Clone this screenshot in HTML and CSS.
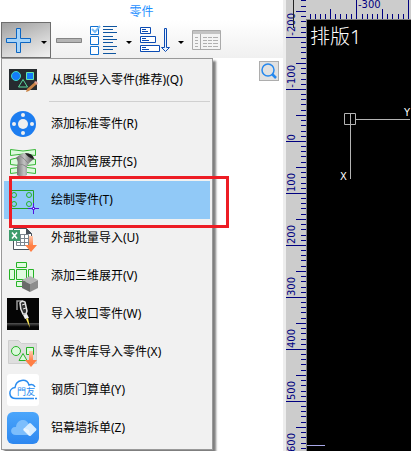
FILE: index.html
```html
<!DOCTYPE html>
<html lang="zh-CN">
<head>
  <meta charset="UTF-8">
  <meta name="viewport" content="width=device-width, initial-scale=1">
  <title>零件</title>
  <link rel="stylesheet" href="styles.css">
</head>
<body>

  <!-- shared shapes -->
  <svg class="defs" width="0" height="0" aria-hidden="true">
    <defs>
      <linearGradient id="arrowFill" x1="0" y1="0" x2="0" y2="1">
        <stop offset="0" stop-color="#ffc9ad"/>
        <stop offset="0.6" stop-color="#ff7f45"/>
      </linearGradient>
      <linearGradient id="pipeFill">
        <stop offset="0" stop-color="#686868"/>
        <stop offset="0.45" stop-color="#c4c4c4"/>
        <stop offset="1" stop-color="#585858"/>
      </linearGradient>
      <linearGradient id="cloudFill" x1="0" y1="0" x2="0" y2="1">
        <stop offset="0" stop-color="#4ba6fb"/>
        <stop offset="1" stop-color="#2d87f0"/>
      </linearGradient>
      <linearGradient id="benchFill" x1="0" y1="0" x2="0" y2="1">
        <stop offset="0" stop-color="#555"/>
        <stop offset="1" stop-color="#000"/>
      </linearGradient>
      <symbol id="ticks-v" viewBox="0 0 20 52">
        <path d="M15 4.5h5M15 9.5h5M15 14.5h5M15 20.5h5M10 25.5h10M15 30.5h5M15 35.5h5M15 41.5h5M15 46.5h5M0 51.5h20"/>
      </symbol>
      <symbol id="ticks-h" viewBox="0 0 52 19">
        <path d="M.5 0v19M6.5 14v5M11.5 14v5M16.5 14v5M21.5 14v5M26.5 9v10M31.5 14v5M36.5 14v5M42.5 14v5M47.5 14v5"/>
      </symbol>
      <symbol id="down-arrow" viewBox="0 0 12 17">
        <path d="M4 0h4v9h4l-6 7-6-7h4z" fill="url(#arrowFill)"/>
      </symbol>
    </defs>
  </svg>

  <div class="app">
    <main class="panel">
      <header class="ribbon">
        <h1 class="ribbon-title">零件</h1>
        <div class="toolbar">
          <button class="tool tool-add" aria-label="添加" aria-expanded="true">
            <svg width="25" height="25" viewBox="0 0 25 25">
              <path d="M10.5.5h4v10h10v4h-10v10h-4v-10H.5v-4h10z" fill="#a5d4fa" stroke="#0b65c2"/>
            </svg>
            <span class="caret"></span>
          </button>
          <button class="tool" aria-label="删除">
            <svg width="26" height="5" viewBox="0 0 26 5">
              <path d="M.5.5h25v4H.5z" fill="#b5b5b5" stroke="#858585"/>
            </svg>
          </button>
          <button class="tool" aria-label="选择">
            <svg width="28" height="30" viewBox="0 0 28 30" fill="none">
              <path d="M.5 1.5h8v8h-8zM.5 11.5h8v8h-8zM.5 21.5h8v8h-8z" fill="#fff" stroke="#0f6fd0"/>
              <path d="M2 4l3 3 5-6" stroke="#7dbdf5" stroke-width="2"/>
              <path d="M13 1.5h14M13 4.5h10M13 7.5h14M13 11.5h10M13 14.5h14M13 17.5h10M13 21.5h14M13 24.5h10M13 28.5h13" stroke="#0f559f"/>
            </svg>
            <span class="caret"></span>
          </button>
          <button class="tool" aria-label="排序">
            <svg width="30" height="26" viewBox="0 0 30 26" fill="none" stroke="#0b4bb3">
              <path d="M.5.5h10v6H.5zM.5 9.5h15v6H.5zM.5 18.5h19v6H.5z" fill="#fff"/>
              <path d="M2 2.5h4M2 4.5h6M2 11.5h4M2 13.5h7M2 20.5h4M2 22.5h7"/>
              <path d="M24.500 1.500h2v19h3l-4 4-4-4h3z" fill="#eaf3ff"/>
            </svg>
            <span class="caret"></span>
          </button>
          <button class="tool" aria-label="列表">
            <svg width="29" height="21" viewBox="0 0 29 21">
              <path d="M.5.5h28v19H.5z" fill="#f4f4f4" stroke="#aaa"/>
              <path d="M1 1h27v3H1z" fill="#c4c4c4"/>
              <path d="M8.500 4v16" stroke="#aaa"/>
              <path d="M3 7.500h3M3 10.500h3M3 13.500h3M3 16.500h3M11 7.500h4M16 7.500h4M21 7.500h5M11 10.500h4M16 10.500h4M21 10.500h5M11 13.500h4M16 13.500h4M21 13.500h5M11 16.500h4M16 16.500h4M21 16.500h5" stroke="#b0b0b0"/>
            </svg>
          </button>
        </div>
      </header>

      <div class="search-row">
        <button class="search" aria-label="搜索">
          <svg width="18" height="18" viewBox="0 0 18 18" fill="none" stroke="#2588ee">
            <circle cx="8" cy="8" r="6" stroke-width="1.500"/>
            <path d="M12 12l4 4" stroke-width="2.500"/>
          </svg>
        </button>
      </div>

      <div class="menu" role="menu">
        <button class="item" role="menuitem">
          <svg class="icon" viewBox="0 0 32 32">
            <path d="M2 5h28v21H2z" fill="#262b2f"/>
            <circle cx="9" cy="12" r="4.500" fill="#147dfa" stroke="#42d9c0"/>
            <path d="M19.500 8.500h7v7h-7z" fill="#147dfa" stroke="#64e8ac"/>
            <path d="M16 15.500l4.500 7.500h-9z" fill="none" stroke="#5cdb9e"/>
            <path d="M19 28l1-3 8-7 2 2-8 7z" fill="#c98447"/>
            <path d="M27 18l2-1 2 2-1 2z" fill="#e4a49a"/>
          </svg>
          从图纸导入零件(推荐)(Q)
        </button>
        <hr class="divider">
        <button class="item" role="menuitem">
          <svg class="icon" viewBox="0 0 32 32">
            <circle cx="16" cy="16" r="13" fill="#1d7df0"/>
            <circle cx="16" cy="16" r="5" fill="#f0f0f0"/>
            <g fill="#f0f0f0">
              <circle cx="16" cy="7" r="2"/><circle cx="16" cy="25" r="2"/>
              <circle cx="7" cy="16" r="2"/><circle cx="25" cy="16" r="2"/>
            </g>
          </svg>
          添加标准零件(R)
        </button>
        <button class="item" role="menuitem">
          <svg class="icon" viewBox="0 0 32 32">
            <g fill="#dcfadc" stroke="#36b636">
              <path d="M3.500 3.500q12.500 3 25 0v6q-12.500-3-25 0z"/>
              <path d="M3.500 13.500q12.500-4 25 0v5q-12.500 3-25 0z"/>
              <path d="M3.500 22.500q12.500-3 25 0v5q-12.500-3-25 0z"/>
            </g>
            <path d="M9 12q5-5 10-5 7 1 8 6-6 4-7 8v8q-5 3-10 0v-8q2-5-1-9z" fill="url(#pipeFill)"/>
            <path d="M18 7q8 0 9 6-6-1-9-6z" fill="#222"/>
            <path d="M10 19q6-2 10 2M13 10q4 2 8 7" fill="none" stroke="#8a8a8a"/>
          </svg>
          添加风管展开(S)
        </button>
        <button class="item active" role="menuitem">
          <svg class="icon" viewBox="0 0 32 32" fill="none">
            <path d="M3.500 6.500h23v18h-23z" stroke="#26a326"/>
            <g stroke="#26b326">
              <circle cx="7" cy="11" r="2.500"/><circle cx="22" cy="11" r="2.500"/>
              <circle cx="7" cy="20" r="2.500"/><circle cx="22" cy="20" r="2.500"/>
            </g>
            <path d="M26.500 19v11M21 24.500h11" stroke="#5314e0"/>
            <path d="M25.500 23.500h2v2h-2z" fill="#fff" stroke="#5314e0"/>
          </svg>
          绘制零件(T)
        </button>
        <button class="item" role="menuitem">
          <svg class="icon" viewBox="0 0 32 32">
            <path d="M6.500 6.500h13l5 5v16h-18z" fill="#fff" stroke="#4a525c"/>
            <path d="M19 6v6h6z" fill="#4a525c"/>
            <path d="M9.500 12.500h12v11h-12zM9 16.500h12M9 20.500h12M13.500 12v12M17.500 12v12" fill="none" stroke="#7c8590"/>
            <path d="M2 8h11v11H2z" fill="#3e9c6c"/>
            <path d="M5 10.500l5 6M10 10.500l-5 6" stroke="#fff" stroke-width="1.500"/>
            <use href="#down-arrow" x="18" y="14" width="12" height="17"/>
          </svg>
          外部批量导入(U)
        </button>
        <button class="item" role="menuitem">
          <svg class="icon" viewBox="0 0 32 32">
            <path d="M9.500 2.500h10v5h-10zM9.500 9.500h10v10h-10zM2.500 9.500h5v10h-5zM21.500 9.500h5v10h-5zM9.500 21.500h9v5h-9z" fill="#e0fbe0" stroke="#26b326"/>
            <path d="M15 20l8-4 8 4-8 4z" fill="#b4b4b4"/>
            <path d="M15 20l8 4v8l-8-4z" fill="#6a6a6a"/>
            <path d="M31 20l-8 4v8l8-4z" fill="#8c8c8c"/>
          </svg>
          添加三维展开(V)
        </button>
        <button class="item" role="menuitem">
          <svg class="icon" viewBox="0 0 32 32">
            <path d="M0 0h32v32H0z" fill="#050505"/>
            <path d="M0 25h32v4H0z" fill="url(#benchFill)"/>
            <path d="M10 12V3h6" fill="none" stroke="#999" stroke-width="1.500"/>
            <path d="M13 5q2-3 5-1l2 9-1 3h-3q-3-5-3-11z" fill="#333" stroke="#e2e2e2" stroke-width="1.500"/>
            <path d="M15 7l3-1M16 11l3-1" stroke="#e2e2e2"/>
            <path d="M16 17l4-1 2 4-4 1z" fill="#efefef"/>
            <path d="M19 21l2-1 2 10z" fill="#ffe95a"/>
          </svg>
          导入坡口零件(W)
        </button>
        <button class="item" role="menuitem">
          <svg class="icon" viewBox="0 0 32 32">
            <path d="M1.500 4.500h10l3 3h15v20h-28z" fill="#dedede" stroke="#cfcfcf"/>
            <g fill="#dcfadc" stroke="#26b326">
              <circle cx="9" cy="15" r="4.500"/>
              <path d="M19.500 11.500h7v7h-7zM16 17.500l4 7h-8z"/>
            </g>
            <use href="#down-arrow" x="18" y="15" width="12" height="17"/>
          </svg>
          从零件库导入零件(X)
        </button>
        <button class="item" role="menuitem">
          <svg class="icon" viewBox="0 0 32 32">
            <rect width="32" height="32" rx="3" fill="#fff"/>
            <path d="M27 24.500H9c-8 0-8-10-1-11C9 5 20 4 22 11c3-1 5 0 6 2" fill="none" stroke="#2a8cf0" stroke-width="1.500"/>
            <path d="M28 24.500h2" stroke="#2a8cf0" stroke-width="1.500"/>
            <text class="logo-text" x="10" y="21">門友</text>
          </svg>
          钢质门算单(Y)
        </button>
        <button class="item" role="menuitem">
          <svg class="icon" viewBox="0 0 32 32">
            <rect width="32" height="32" rx="6" fill="url(#cloudFill)"/>
            <path d="M9 23c-7 0-6-9 0-8 1-9 12-9 13-1 6 1 5 9 0 9z" fill="#7dbefc"/>
            <path d="M22 11.500q1-1 2 0l5 5q1 1 0 2l-5 5q-1 1-2 0l-5-5q-1-1 0-2z" fill="#d6ecff"/>
            <path d="M17 16l5 2 1 5-1 1-6-6z" fill="#fff" opacity=".5"/>
          </svg>
          铝幕墙拆单(Z)
        </button>
        <div class="marker"></div>
      </div>
    </main>

    <section class="workspace">
      <div class="ruler-v">
        <div class="seg-v"><svg><use href="#ticks-v"/></svg><span>-200</span></div>
        <div class="seg-v"><svg><use href="#ticks-v"/></svg><span>-100</span></div>
        <div class="seg-v"><svg><use href="#ticks-v"/></svg><span>0</span></div>
        <div class="seg-v"><svg><use href="#ticks-v"/></svg><span>100</span></div>
        <div class="seg-v"><svg><use href="#ticks-v"/></svg><span>200</span></div>
        <div class="seg-v"><svg><use href="#ticks-v"/></svg><span>300</span></div>
        <div class="seg-v"><svg><use href="#ticks-v"/></svg><span>400</span></div>
        <div class="seg-v"><svg><use href="#ticks-v"/></svg><span>500</span></div>
        <div class="seg-v"><svg><use href="#ticks-v"/></svg><span>600</span></div>
        <div class="cursor-mark"></div>
      </div>
      <div class="ruler-h">
        <div class="seg-h"><svg><use href="#ticks-h"/></svg></div>
        <div class="seg-h"><svg><use href="#ticks-h"/></svg><span>-300</span></div>
        <div class="seg-h"><svg><use href="#ticks-h"/></svg></div>
      </div>
      <div class="canvas">
        <h2 class="layout-name">排版1</h2>
        <svg class="axes" width="68" height="74" viewBox="0 0 68 74">
          <path d="M.5 6.500h11v11H.5zM6.500 6v66M12 12.500h54" fill="none" stroke="#b4b4b4"/>
        </svg>
        <span class="axis axis-x">X</span>
        <span class="axis axis-y">Y</span>
        <div class="sheet-edge"></div>
      </div>
    </section>
  </div>

</body>
</html>
```
FILE: styles.css
```css
* {
  box-sizing: border-box;
}

body {
  margin: 0;
  background: #fff;
  font-family: "Noto Sans", "Noto Sans CJK SC", sans-serif;
  font-size: 12px;
  color: #000;
}

button {
  font: inherit;
  color: inherit;
  border: 0;
  padding: 0;
  background: none;
}

svg {
  display: block;
  flex: none;
}

.defs {
  position: absolute;
}

.app {
  display: flex;
  height: 100vh;
  overflow: hidden;
}

/* left panel */
.panel {
  position: relative;
  flex: 0 0 286px;
  border-right: 3px solid #ededed;
}

.ribbon {
  background: linear-gradient(#fff 20px, #f0f0f0);
}

.ribbon-title {
  margin: 0;
  height: 22px;
  line-height: 24px;
  font-size: 12px;
  font-weight: normal;
  text-align: center;
  color: #1e8fff;
}

.toolbar {
  display: flex;
  align-items: center;
  gap: 8px;
  height: 36px;
  padding-left: 1px;
}

.tool {
  display: flex;
  align-items: center;
  gap: 8px;
}

.tool-add {
  gap: 10px;
  height: 36px;
  width: 50px;
  margin-right: -3px;
  padding-left: 4px;
  border: 1px solid #6e6e6e;
  background: linear-gradient(160deg, #a0a0a0, #d4d4d4 60%, #f0f0f0);
}

.caret {
  border: 3px solid transparent;
  border-top-color: #000;
  border-bottom: 0;
  margin-top: 4px;
}

.search-row {
  display: flex;
  justify-content: flex-end;
  padding: 3px 4px;
}

.search {
  width: 20px;
  height: 20px;
  border: 1px solid #adadad;
  background: #e1e1e1;
}

/* drop-down menu */
.menu {
  position: absolute;
  top: 58px;
  left: 1px;
  width: 212px;
  padding: 2px;
  border: 1px solid #999;
  background: #f1f1f1;
  box-shadow: 3px 3px 2px rgba(0, 0, 0, 0.5);
}

.item {
  display: flex;
  align-items: center;
  gap: 12px;
  width: 100%;
  height: 38px;
  padding: 0 0 2px 3px;
  white-space: nowrap;
  text-align: left;
}

.item.active {
  background: #91c9f7;
}

.icon {
  width: 32px;
  height: 32px;
  margin-top: 2px;
}

.logo-text {
  font-size: 9px;
  fill: #2a8cf0;
}

.divider {
  height: 1px;
  margin: 2px 0 3px 45px;
  border: 0;
  background: #d0d0d0;
}

.marker {
  position: absolute;
  top: 117px;
  left: 7px;
  width: 220px;
  height: 52px;
  border: 3px solid #ed1c24;
  pointer-events: none;
}

/* drawing area */
.workspace {
  flex: 1;
  display: grid;
  grid-template-columns: 20px 1fr;
  grid-template-rows: 19px 1fr;
  min-width: 0;
  background: #ccc;
  color: #000080;
  font-family: "DejaVu Sans", sans-serif;
  font-size: 10px;
  line-height: 10px;
}

.workspace use {
  stroke: #000080;
}

.ruler-v {
  position: relative;
  grid-row: 1 / 3;
  height: 100vh;
  overflow: hidden;
}

.seg-v {
  position: relative;
  height: 52px;
}

.seg-v:first-child {
  margin-top: -14px;
}

.seg-v svg {
  width: 20px;
  height: 52px;
}

.seg-v span {
  position: absolute;
  left: 1px;
  bottom: 2px;
  writing-mode: vertical-rl;
  transform: rotate(180deg);
}

.cursor-mark {
  position: absolute;
  top: 0;
  left: 7px;
  width: 1px;
  height: 28px;
  background: #222;
}

.ruler-h {
  display: flex;
  overflow: hidden;
}

.seg-h {
  position: relative;
  flex: 0 0 52px;
}

.seg-h:first-child {
  margin-left: -2px;
}

.seg-h svg {
  width: 52px;
  height: 19px;
}

.seg-h span {
  position: absolute;
  top: 0;
  left: 2px;
  line-height: 9px;
}

.canvas {
  position: relative;
  overflow: hidden;
  border-top: 1px solid #808080;
  border-left: 1px solid #808080;
  background: #000;
  color: #fff;
}

.layout-name {
  margin: 5px 3px;
  font-family: "Noto Sans", "Noto Sans CJK SC", sans-serif;
  font-size: 20px;
  font-weight: 300;
  line-height: 24px;
}

.axes {
  position: absolute;
  left: 37px;
  top: 87px;
}

.axis {
  position: absolute;
}

.axis-x {
  left: 33px;
  top: 152px;
}

.axis-y {
  left: 97px;
  top: 88px;
}

.sheet-edge {
  position: absolute;
  left: 0;
  bottom: 5px;
  width: 18px;
  height: 1px;
  background: #a8a8e8;
}
```
